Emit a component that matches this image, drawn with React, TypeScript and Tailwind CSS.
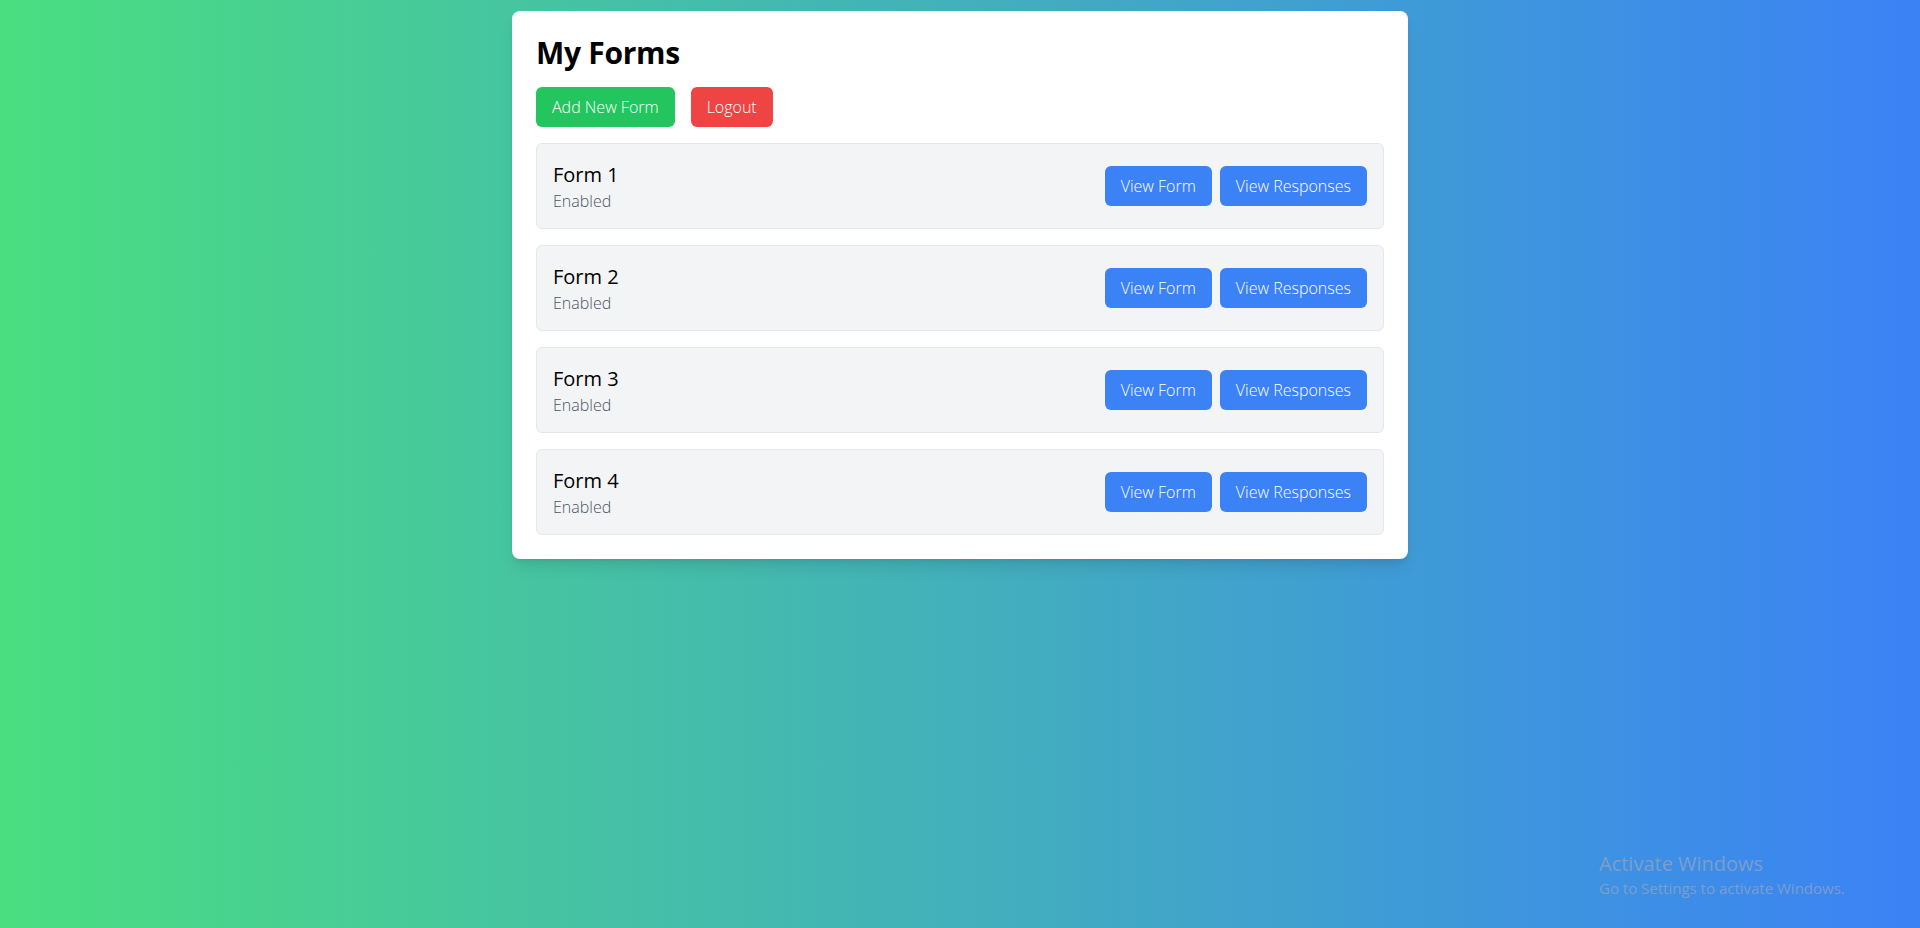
import React from 'react';

const forms = [
  { id: 1, name: 'Form 1', status: 'Enabled' },
  { id: 2, name: 'Form 2', status: 'Enabled' },
  { id: 3, name: 'Form 3', status: 'Enabled' },
  { id: 4, name: 'Form 4', status: 'Enabled' },
];

const App = () => {
  return (
    <div
      className="relative min-h-screen w-full bg-linear-to-r/srgb from-[#4ade80] to-[#3b82f6] pt-[11px]"
      style={{ fontFamily: '"Open Sans", "Noto Sans", sans-serif' }}
    >
      <div className="max-w-4xl mx-auto bg-white rounded-lg shadow-lg p-6">
        <h1 className="text-3xl font-bold text-black mb-4 tracking-[-0.3px]">My Forms</h1>
        <div className="flex gap-4 mb-4">
          <button className="bg-[#22c55e] text-white font-light px-4 py-2 rounded-md">Add New Form</button>
          <button className="bg-[#ef4444] text-white font-light px-4 py-2 rounded-md">Logout</button>
        </div>

        <div className="flex flex-col gap-4">
          {forms.map((form) => (
            <div
              key={form.id}
              className="flex items-center justify-between bg-[#f3f4f6] border border-[#e5e7eb] rounded-md p-4"
            >
              <div>
                <h2 className="text-xl leading-[30px] text-black">{form.name}</h2>
                <p className="text-[#4b5563] font-light leading-[22px]">{form.status}</p>
              </div>
              <div className="flex gap-2">
                <button className="bg-[#3b82f6] text-white font-light px-4 py-2 rounded-md">View Form</button>
                <button className="bg-[#3b82f6] text-white font-light px-4 py-2 rounded-md">View Responses</button>
              </div>
            </div>
          ))}
        </div>
      </div>

      <div className="absolute left-[1599px] top-[850px] text-[#8fa3c4]/80">
        <div className="text-xl leading-7">Activate Windows</div>
        <div className="text-[15px] leading-5">Go to Settings to activate Windows.</div>
      </div>
    </div>
  );
};

export default App;
